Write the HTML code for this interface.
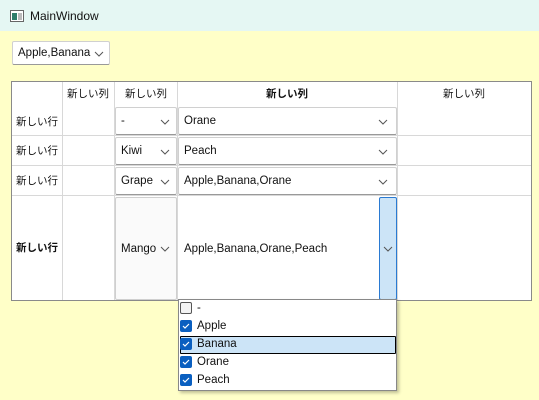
<!DOCTYPE html>
<html><head><meta charset="utf-8"><style>
*{margin:0;padding:0;box-sizing:border-box}
body{width:539px;height:400px;overflow:hidden;background:#ffffc8;font-family:"Liberation Sans","Noto Sans CJK JP",sans-serif;font-size:11.5px;color:#111;position:relative}
.a{position:absolute}
.title{left:0;top:0;width:539px;height:31px;background:#e5f7f3}
.t{white-space:nowrap;line-height:1}
.j{font-size:10.5px}
.cb{position:absolute;background:#fff;border:1px solid #d0d0d0;border-bottom:1px solid #999;border-radius:2px}
.cb span{position:absolute;left:5px;top:50%;transform:translateY(-50%);white-space:nowrap}
.chev{position:absolute;width:10px;height:6px}
.vl{position:absolute;width:1px;background:#d8d8d8}
.hl{position:absolute;height:1px;background:#d8d8d8}
.chk{position:absolute;left:180px;width:12px;height:12px;border-radius:2px;background:#0a5fc0}
</style></head><body>
<div class="a title"></div>
<svg class="a" style="left:10px;top:10px" width="14" height="12"><rect x="0.5" y="0.5" width="13" height="11" fill="#fff" stroke="#666"/><rect x="2" y="3" width="5" height="7" fill="#2e7d6a"/><rect x="8" y="3" width="4" height="7" fill="#bbb"/></svg>
<div class="a t" style="left:30px;top:10px;font-size:12px">MainWindow</div>

<div class="cb" style="left:12px;top:41px;width:98px;height:24px"><span>Apple,Banana</span><svg class="chev" style="right:5px;top:9px" viewBox="0 0 10 6"><path d="M1 1l4 4 4-4" fill="none" stroke="#555"/></svg></div>

<div class="a" style="left:11px;top:81px;width:521px;height:220px;background:#fff;border:1px solid #8a8a8a"></div>
<div class="vl" style="left:62px;top:82px;height:218px"></div>
<div class="vl" style="left:114px;top:82px;height:218px"></div>
<div class="vl" style="left:177px;top:82px;height:218px"></div>
<div class="vl" style="left:397px;top:82px;height:218px"></div>
<div class="hl" style="left:12px;top:135px;width:519px"></div>
<div class="hl" style="left:12px;top:165px;width:519px"></div>
<div class="hl" style="left:12px;top:195px;width:519px"></div>

<div class="a t j" style="left:67px;top:89px">新しい列</div>
<div class="a t j" style="left:125px;top:89px">新しい列</div>
<div class="a t j" style="left:266px;top:89px;font-weight:bold">新しい列</div>
<div class="a t j" style="left:443px;top:89px">新しい列</div>
<div class="a t j" style="left:16px;top:117px">新しい行</div>
<div class="a t j" style="left:16px;top:146px">新しい行</div>
<div class="a t j" style="left:16px;top:176px">新しい行</div>
<div class="a t j" style="left:16px;top:243px;font-weight:bold">新しい行</div>

<div class="cb" style="left:115px;top:107px;width:62px;height:28px"><span>-</span><svg class="chev" style="right:6px;top:11px" viewBox="0 0 10 6"><path d="M1 1l4 4 4-4" fill="none" stroke="#555"/></svg></div>
<div class="cb" style="left:115px;top:137px;width:62px;height:28px"><span>Kiwi</span><svg class="chev" style="right:6px;top:11px" viewBox="0 0 10 6"><path d="M1 1l4 4 4-4" fill="none" stroke="#555"/></svg></div>
<div class="cb" style="left:115px;top:167px;width:62px;height:28px"><span>Grape</span><svg class="chev" style="right:6px;top:11px" viewBox="0 0 10 6"><path d="M1 1l4 4 4-4" fill="none" stroke="#555"/></svg></div>
<div class="cb" style="left:115px;top:197px;width:62px;height:103px;background:#fafafa;border-color:#cfcfcf"><span>Mango</span><svg class="chev" style="right:6px;top:48px" viewBox="0 0 10 6"><path d="M1 1l4 4 4-4" fill="none" stroke="#555"/></svg></div>

<div class="cb" style="left:178px;top:107px;width:219px;height:28px"><span>Orane</span><svg class="chev" style="right:8px;top:11px" viewBox="0 0 10 6"><path d="M1 1l4 4 4-4" fill="none" stroke="#555"/></svg></div>
<div class="cb" style="left:178px;top:137px;width:219px;height:28px"><span>Peach</span><svg class="chev" style="right:8px;top:11px" viewBox="0 0 10 6"><path d="M1 1l4 4 4-4" fill="none" stroke="#555"/></svg></div>
<div class="cb" style="left:178px;top:167px;width:219px;height:28px"><span>Apple,Banana,Orane</span><svg class="chev" style="right:8px;top:11px" viewBox="0 0 10 6"><path d="M1 1l4 4 4-4" fill="none" stroke="#555"/></svg></div>
<div class="cb" style="left:178px;top:197px;width:219px;height:103px;border-color:#fff"><span style="left:5px">Apple,Banana,Orane,Peach</span></div>
<div class="a" style="left:379px;top:197px;width:18px;height:103px;background:#cce4f7;border:1px solid #2a7ad2;border-radius:2px"><svg class="chev" style="left:3px;top:48px" viewBox="0 0 10 6"><path d="M1 1l4 4 4-4" fill="none" stroke="#555"/></svg></div>

<div class="a" style="left:178px;top:299px;width:219px;height:92px;background:#fff;border:1px solid #888;box-shadow:2px 2px 3px rgba(0,0,0,.25)"></div>
<div class="a" style="left:180px;top:336px;width:216px;height:18px;background:#cce4f7;border:1px solid #000;border-radius:1px"></div>
<div class="a" style="left:180px;top:302px;width:12px;height:12px;border:1px solid #555;border-radius:2px;background:#f3f3f3"></div>
<div class="chk" style="top:320px"></div><div class="chk" style="top:338px"></div><div class="chk" style="top:356px"></div><div class="chk" style="top:374px"></div>
<svg class="a" style="left:180px;top:320px" width="12" height="70"><g fill="none" stroke="#fff" stroke-width="1.2"><path d="M3 6l2 2 4-4"/><path d="M3 24l2 2 4-4"/><path d="M3 42l2 2 4-4"/><path d="M3 60l2 2 4-4"/></g></svg>
<div class="a t" style="left:197px;top:303px">-</div>
<div class="a t" style="left:197px;top:321px">Apple</div>
<div class="a t" style="left:197px;top:339px">Banana</div>
<div class="a t" style="left:197px;top:357px">Orane</div>
<div class="a t" style="left:197px;top:375px">Peach</div>
</body></html>
